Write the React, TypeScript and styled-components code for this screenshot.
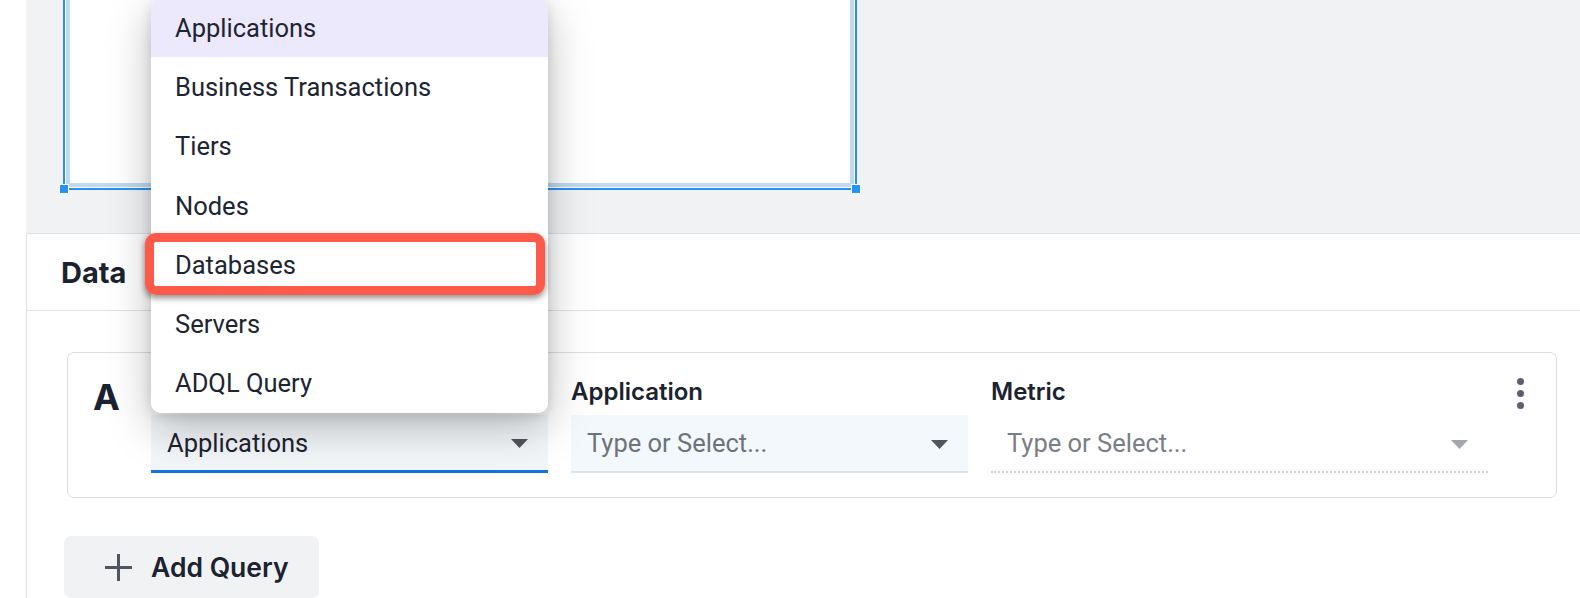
import React from "react";
import styled, { createGlobalStyle } from "styled-components";

const Global = createGlobalStyle`
  html, body { margin: 0; padding: 0; background: #ffffff; }
  body { font-family: "Roboto", "Liberation Sans", sans-serif; color: #1d2330; }
  * { box-sizing: border-box; }
`;

const Root = styled.div`
  position: relative;
  width: 1580px;
  height: 598px;
  overflow: hidden;
  background: #ffffff;
  display: flex;
  flex-direction: column;
`;

const Workspace = styled.div`
  flex: 1;
  margin-left: 26px;
  display: flex;
  flex-direction: column;
`;

const Canvas = styled.div`
  position: relative;
  height: 233px;
  flex-shrink: 0;
  background: #f1f2f4;
`;

const Widget = styled.div`
  position: absolute;
  left: 37px;
  top: -20px;
  width: 794px;
  height: 210px;
  border: 2px solid #2b8ff0;
  padding: 1px;
  background: #ffffff;
`;

const WidgetInner = styled.div`
  width: 100%;
  height: 100%;
  border: 4px solid #bdd9f4;
  background: #ffffff;
`;

const Handle = styled.span<{ $side: "left" | "right" }>`
  position: absolute;
  bottom: -6px;
  ${(p) => (p.$side === "left" ? "left: -6px;" : "right: -6px;")}
  width: 10px;
  height: 10px;
  background: #2196f3;
  border: 1px solid #ffffff;
`;

const Panel = styled.section`
  flex: 1;
  background: #ffffff;
  border-top: 1px solid #e1e2e5;
  border-left: 1px solid #e1e2e5;
  display: flex;
  flex-direction: column;
`;

const PanelHeader = styled.header`
  height: 77px;
  flex-shrink: 0;
  display: flex;
  align-items: center;
  padding-left: 34px;
  border-bottom: 1px solid #e1e2e5;
  font-family: "Inter", "Liberation Sans", sans-serif;
  font-weight: 700;
  font-size: 29px;
  color: #1b2230;
`;

const PanelBody = styled.div`
  padding: 41px 23px 0 40px;
  display: flex;
  flex-direction: column;
  align-items: flex-start;
`;

const QueryCard = styled.div`
  width: 100%;
  height: 146px;
  border: 1px solid #dcdde0;
  border-radius: 7px;
  display: flex;
  padding: 25px 0 0 25px;
`;

const QueryLetter = styled.div`
  width: 58px;
  flex-shrink: 0;
  font-family: "Inter", "Liberation Sans", sans-serif;
  font-weight: 700;
  font-size: 36px;
  line-height: 38px;
  color: #1b2230;
`;

const Fields = styled.div`
  display: flex;
  gap: 23px;
`;

const Field = styled.div<{ $w: number }>`
  width: ${(p) => p.$w}px;
  display: flex;
  flex-direction: column;
  gap: 9px;
`;

const Label = styled.div`
  height: 28px;
  line-height: 28px;
  font-family: "Inter", "Liberation Sans", sans-serif;
  font-weight: 600;
  font-size: 24px;
  color: #1b2230;
`;

type Variant = "active" | "filled" | "plain";

const SelectBox = styled.div<{ $v: Variant }>`
  height: 58px;
  display: flex;
  align-items: center;
  justify-content: space-between;
  padding: 0 20px 0 16px;
  font-family: "Roboto", "Liberation Sans", sans-serif;
  font-size: 25.5px;
  background: ${(p) =>
    p.$v === "active" ? "#f3f6f9" : p.$v === "filled" ? "#f3f8fc" : "transparent"};
  border-bottom: ${(p) =>
    p.$v === "active"
      ? "3px solid #1273e6"
      : p.$v === "filled"
      ? "2px solid #dfe2e6"
      : "2px dotted #d2d3d6"};
  color: ${(p) => (p.$v === "active" ? "#1d2330" : p.$v === "filled" ? "#6e727a" : "#7a7e85")};
`;

const Caret = styled.svg`
  flex-shrink: 0;
  margin-top: 2px;
`;

const Kebab = styled.div`
  margin-left: 29px;
  display: flex;
  flex-direction: column;
  gap: 5px;
`;

const Dot = styled.span`
  width: 7px;
  height: 7px;
  border-radius: 50%;
  background: #5b616c;
`;

const AddButton = styled.button`
  margin-top: 38px;
  margin-left: -3px;
  width: 255px;
  height: 62px;
  border: none;
  border-radius: 7px;
  background: #f1f2f4;
  display: flex;
  align-items: center;
  gap: 19px;
  padding: 0 0 0 41px;
  font-family: "Inter", "Liberation Sans", sans-serif;
  font-weight: 600;
  font-size: 26.5px;
  color: #1b2230;
  cursor: pointer;
`;

const Menu = styled.ul`
  position: absolute;
  left: 151px;
  top: -2px;
  width: 397px;
  margin: 0;
  padding: 0;
  list-style: none;
  background: #ffffff;
  border-radius: 10px;
  overflow: hidden;
  box-shadow: 0 14px 44px rgba(0, 0, 0, 0.26), 0 3px 12px rgba(0, 0, 0, 0.12);
  z-index: 5;
`;

const MenuItem = styled.li<{ $selected?: boolean }>`
  height: 59.3px;
  display: flex;
  align-items: center;
  padding-left: 24px;
  font-family: "Roboto", "Liberation Sans", sans-serif;
  font-size: 25.5px;
  color: #1d2532;
  background: ${(p) => (p.$selected ? "#ede9fd" : "#ffffff")};
`;

const Callout = styled.div`
  position: absolute;
  left: 145px;
  top: 233px;
  width: 400px;
  height: 62px;
  border: 9px solid #fc5a4a;
  border-radius: 11px;
  box-shadow: 0 3px 6px rgba(0, 0, 0, 0.45);
  z-index: 6;
  pointer-events: none;
`;

const CaretIcon = ({ color }: { color: string }) => (
  <Caret width="17" height="9" viewBox="0 0 17 9">
    <path d="M0 0 L17 0 L8.5 9 Z" fill={color} />
  </Caret>
);

const PlusIcon = () => (
  <svg width="27" height="27" viewBox="0 0 27 27">
    <path d="M13.5 0 V27 M0 13.5 H27" stroke="#50565f" strokeWidth="3" />
  </svg>
);

const menuItems = [
  "Applications",
  "Business Transactions",
  "Tiers",
  "Nodes",
  "Databases",
  "Servers",
  "ADQL Query",
];

export default function App() {
  return (
    <>
      <Global />
      <Root>
        <Workspace>
          <Canvas>
            <Widget>
              <WidgetInner />
              <Handle $side="left" />
              <Handle $side="right" />
            </Widget>
          </Canvas>
          <Panel>
            <PanelHeader>Data</PanelHeader>
            <PanelBody>
              <QueryCard>
                <QueryLetter>A</QueryLetter>
                <Fields>
                  <Field $w={397}>
                    <Label aria-hidden="true" />
                    <SelectBox $v="active">
                      <span>Applications</span>
                      <CaretIcon color="#50555e" />
                    </SelectBox>
                  </Field>
                  <Field $w={397}>
                    <Label>Application</Label>
                    <SelectBox $v="filled">
                      <span>Type or Select...</span>
                      <CaretIcon color="#50555e" />
                    </SelectBox>
                  </Field>
                  <Field $w={497}>
                    <Label>Metric</Label>
                    <SelectBox $v="plain">
                      <span>Type or Select...</span>
                      <CaretIcon color="#a4a6ad" />
                    </SelectBox>
                  </Field>
                </Fields>
                <Kebab>
                  <Dot />
                  <Dot />
                  <Dot />
                </Kebab>
              </QueryCard>
              <AddButton>
                <PlusIcon />
                Add Query
              </AddButton>
            </PanelBody>
          </Panel>
        </Workspace>
        <Menu>
          {menuItems.map((m, i) => (
            <MenuItem key={m} $selected={i === 0}>
              {m}
            </MenuItem>
          ))}
        </Menu>
        <Callout />
      </Root>
    </>
  );
}
